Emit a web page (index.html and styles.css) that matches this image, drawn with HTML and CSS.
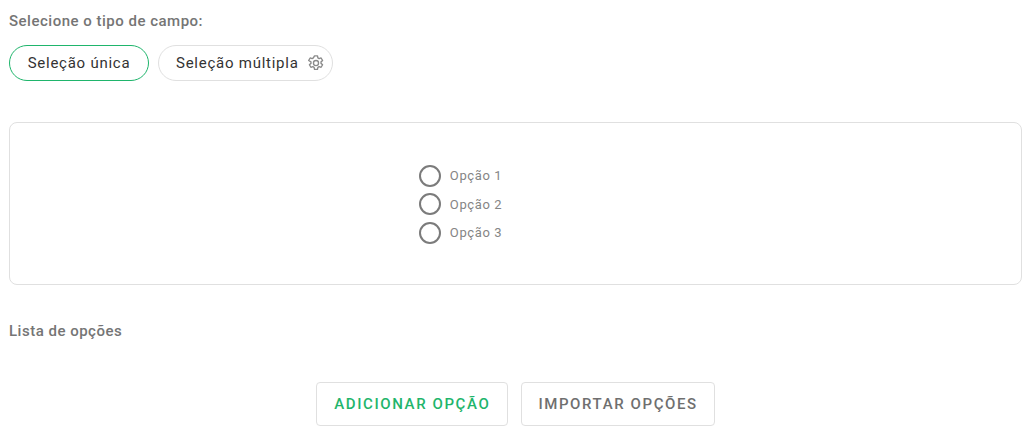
FILE: index.html
```html
<!DOCTYPE html>
<html lang="pt">
<head>
<meta charset="utf-8">
<title>Tipo de campo</title>
<link rel="stylesheet" href="styles.css">
</head>
<body>
<main class="page">
  <p class="label label-type">Selecione o tipo de campo:</p>
  <div class="chips">
    <button class="chip chip-active">Seleção única</button>
    <button class="chip chip-icon">Seleção múltipla
      <svg class="gear" viewBox="0 0 24 24" width="18" height="18" fill="none" stroke="#8a8a8a" stroke-width="1.8" stroke-linejoin="round">
        <path d="M10 2.5h4l.5 2.7 1.7 1 2.6-.9 2 3.4-2.1 1.8v2l2.1 1.8-2 3.4-2.6-.9-1.7 1-.5 2.7h-4l-.5-2.7-1.7-1-2.6.9-2-3.4 2.1-1.8v-2L2.2 8.7l2-3.4 2.6.9 1.7-1z"/>
        <circle cx="12" cy="12" r="3.4"/>
      </svg>
    </button>
  </div>
  <section class="preview">
    <div class="options">
      <div class="option"><span class="radio"></span><span class="option-text">Opção 1</span></div>
      <div class="option"><span class="radio"></span><span class="option-text">Opção 2</span></div>
      <div class="option"><span class="radio"></span><span class="option-text">Opção 3</span></div>
    </div>
  </section>
  <p class="label label-list">Lista de opções</p>
  <div class="actions">
    <button class="action action-add">ADICIONAR OPÇÃO</button>
    <button class="action action-import">IMPORTAR OPÇÕES</button>
  </div>
</main>
</body>
</html>
```
FILE: styles.css
```css
* { box-sizing: border-box; }
html, body { margin: 0; padding: 0; background: #fff; }
body { font-family: Roboto, "Liberation Sans", sans-serif; overflow: hidden; }
.page { width: 1029px; height: 434px; padding: 13px 7px 0 9px; }
.label {
  margin: 0;
  font-size: 15px;
  line-height: 17px;
  font-weight: 500;
  letter-spacing: 0.5px;
  color: #757575;
}
.chips { display: flex; gap: 9px; margin-top: 15px; }
.chip {
  height: 36px;
  border-radius: 18px;
  border: 1px solid #e0e0e0;
  background: #fff;
  font: 400 15px/18px Roboto, sans-serif;
  letter-spacing: 0.75px;
  color: #333;
  display: flex;
  align-items: center;
}
.chip-active { border-color: #1fb56c; width: 140px; justify-content: center; padding: 0; }
.chip-icon { width: 175px; padding: 0 0 0 17px; gap: 8px; }
.gear { flex: none; }
.preview {
  margin-top: 41px;
  height: 163px;
  border: 1px solid #e0e0e0;
  border-radius: 8px;
  padding: 1px 110px 0 0;
  display: flex;
  align-items: center;
  justify-content: center;
}
.options { display: flex; flex-direction: column; gap: 5.5px; }
.option { display: flex; align-items: center; gap: 9px; height: 23px; }
.radio { width: 22px; height: 22px; border: 2.5px solid #7b7b7b; border-radius: 50%; }
.option-text { font-size: 13px; letter-spacing: 0.6px; color: #858585; }
.label-list { margin-top: 38px; }
.actions { display: flex; justify-content: center; gap: 13px; margin-top: 42px; }
.action {
  height: 44px;
  background: #fff;
  border: 1px solid #e0e0e0;
  border-radius: 4px;
  font: 500 15px/16px Roboto, sans-serif;
  letter-spacing: 1.6px;
  padding: 0 17px;
}
.action-add { color: #1fb56c; }
.action-import { color: #6f6f6f; padding: 0 16px; }
```
